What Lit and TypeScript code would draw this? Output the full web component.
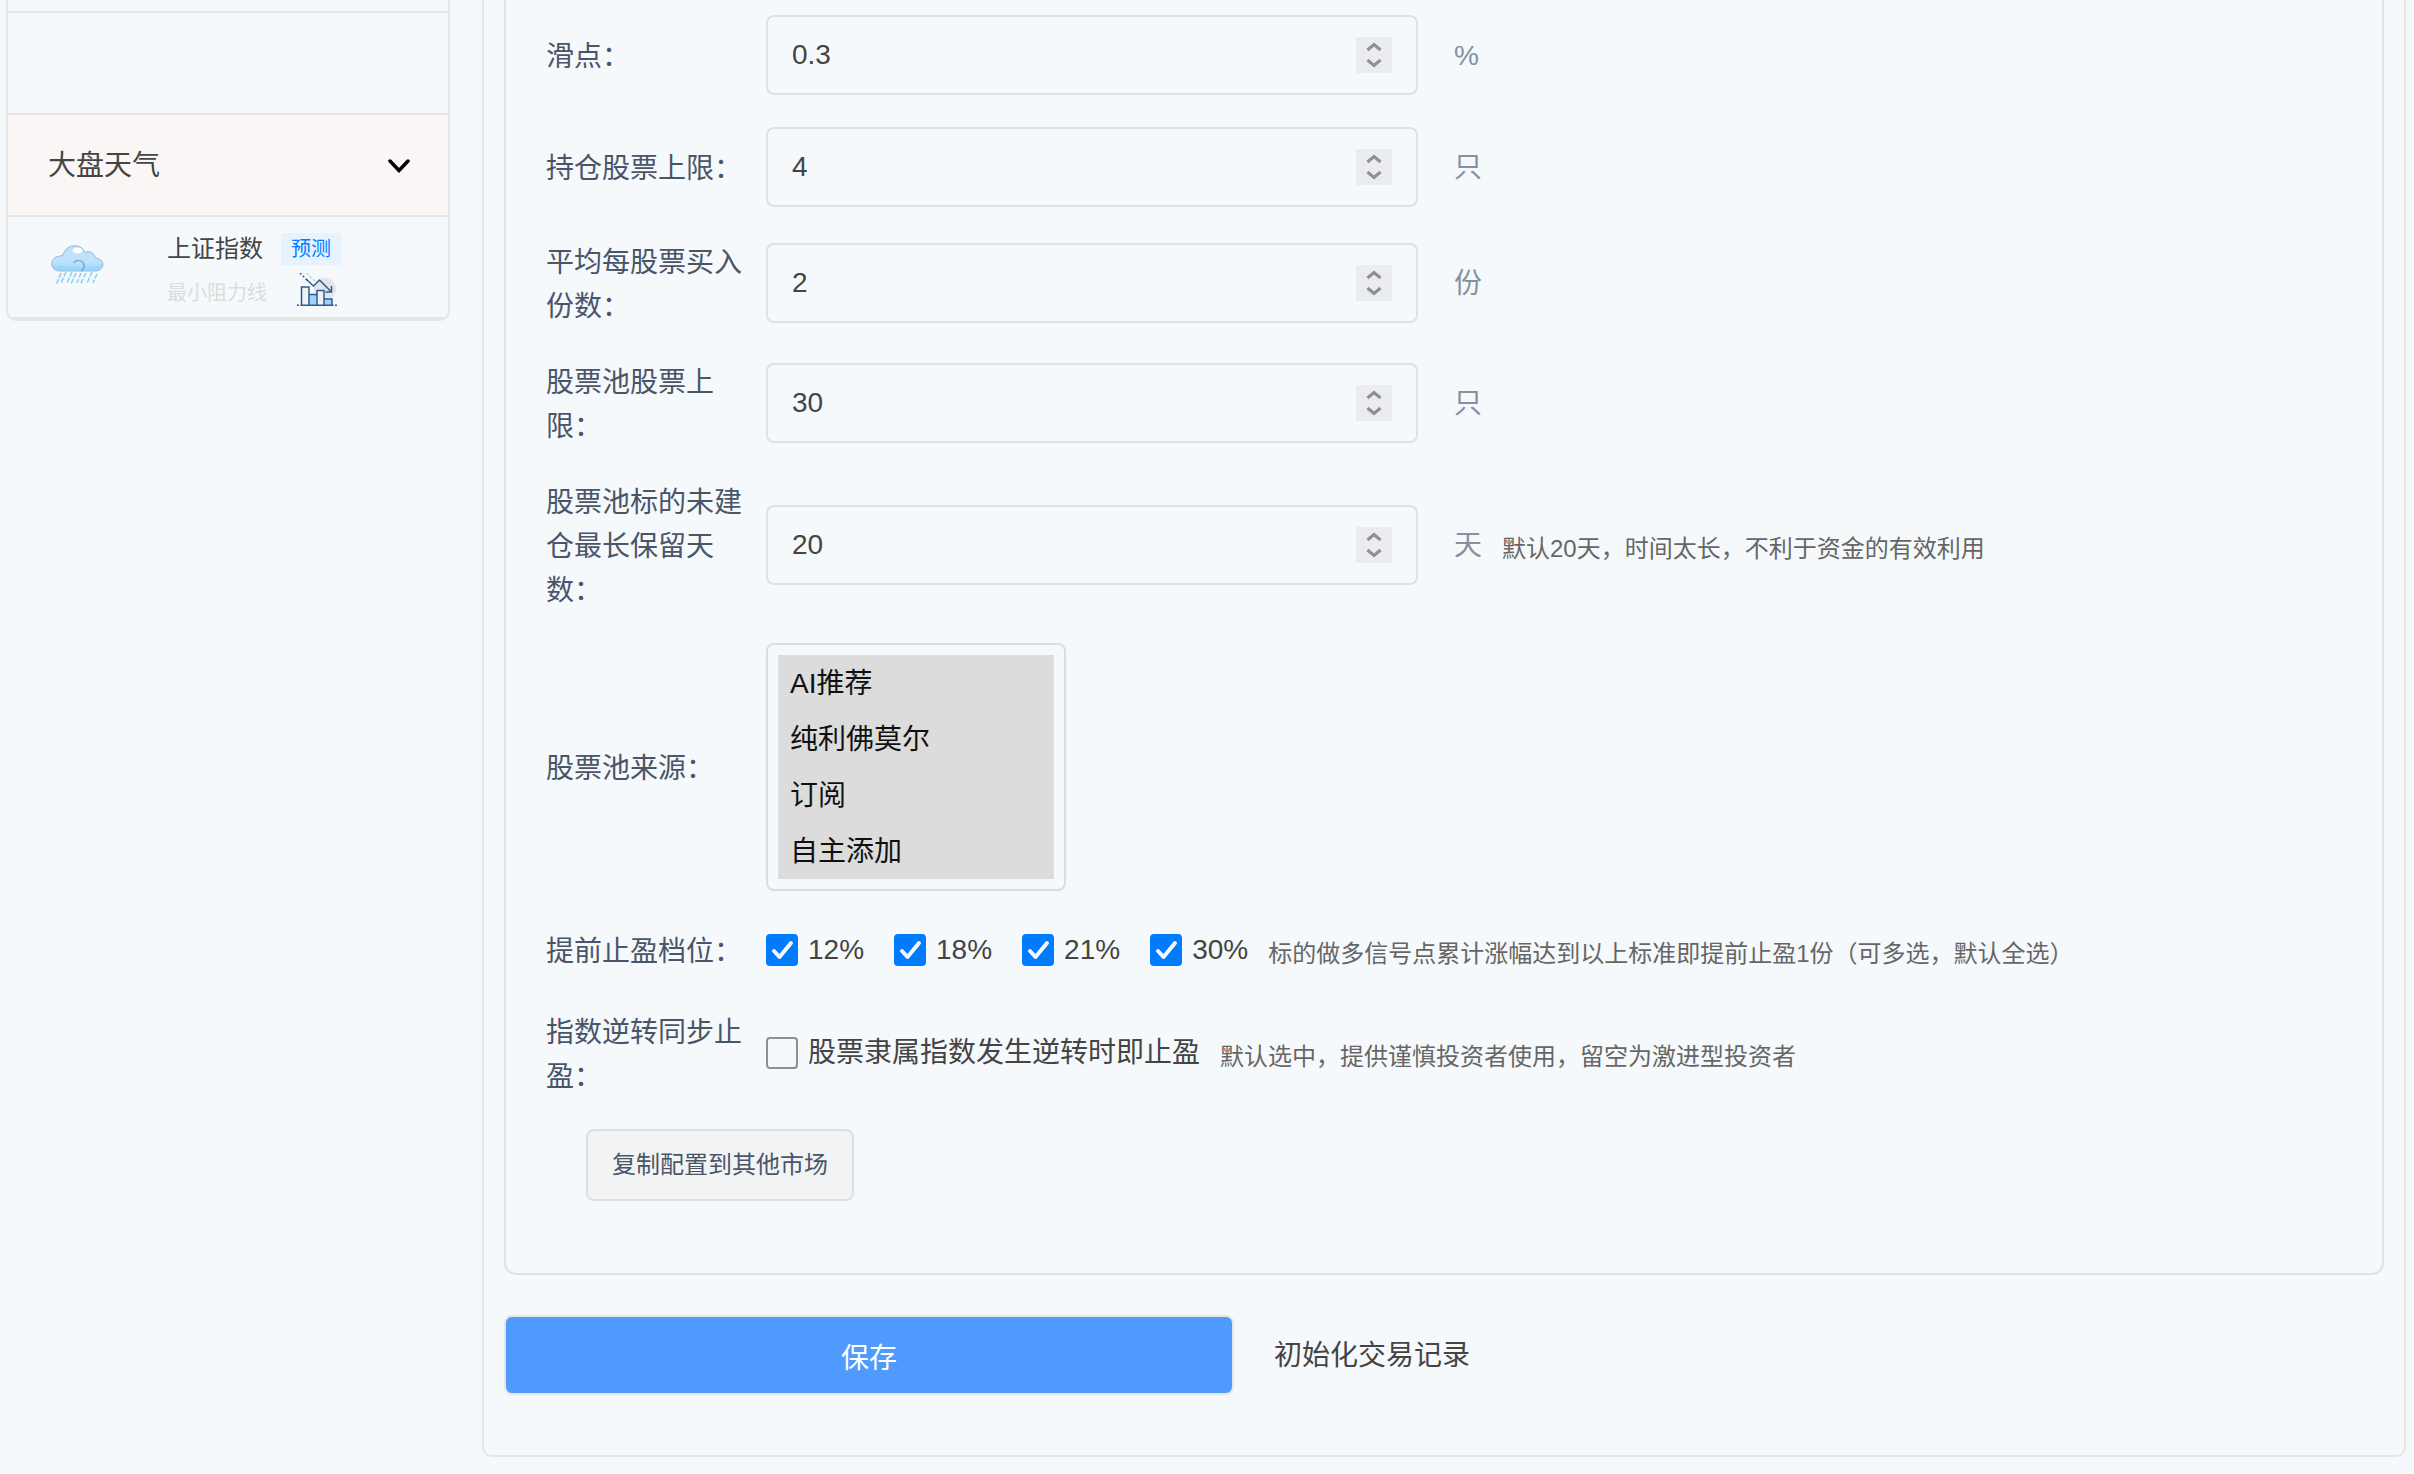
import { LitElement, html, css, svg } from "lit";
import { customElement, property } from "lit/decorators.js";

interface NumberField {
  id: string;
  label: string;
  value: string;
  unit: string;
  step: string;
  note?: string;
}

const FIELDS: NumberField[] = [
  { id: "slippage", label: "滑点：", value: "0.3", unit: "%", step: "0.1" },
  { id: "holdings", label: "持仓股票上限：", value: "4", unit: "只", step: "1" },
  { id: "portions", label: "平均每股票买入份数：", value: "2", unit: "份", step: "1" },
  { id: "pool", label: "股票池股票上限：", value: "30", unit: "只", step: "1" },
  {
    id: "retention",
    label: "股票池标的未建仓最长保留天数：",
    value: "20",
    unit: "天",
    step: "1",
    note: "默认20天，时间太长，不利于资金的有效利用",
  },
];

const SOURCES = ["AI推荐", "纯利佛莫尔", "订阅", "自主添加"];
const LEVELS = ["12%", "18%", "21%", "30%"];

@customElement("check-box")
class CheckBox extends LitElement {
  @property({ type: Boolean }) checked = false;
  @property() label = "";

  static styles = css`
    :host {
      display: block;
    }
    .item {
      display: flex;
      align-items: center;
      gap: 10px;
      line-height: 44px;
      color: #444;
    }
    .frame {
      position: relative;
      display: block;
      width: 32px;
      height: 32px;
    }
    .tick {
      display: block;
      appearance: none;
      width: 32px;
      height: 32px;
      margin: 0;
      box-sizing: border-box;
      border: 2px solid #8d8d9d;
      border-radius: 4px;
      background: transparent;
    }
    .tick:checked {
      border-color: #007bff;
      background: #007bff;
    }
    .mark {
      position: absolute;
      inset: 0;
      pointer-events: none;
      visibility: hidden;
    }
    .tick:checked + .mark {
      visibility: visible;
    }
  `;

  render() {
    return html`<label class="item">
      <span class="frame">
        <input class="tick" type="checkbox" .checked=${this.checked} />
        <svg class="mark" width="32" height="32" viewBox="0 0 32 32" fill="none" stroke="#f5f9fc" stroke-width="4" stroke-linecap="round" stroke-linejoin="round">
          <path d="M8 17 13.500 23 25 9" />
        </svg>
      </span>
      <span>${this.label}</span>
    </label>`;
  }
}

const cloudIcon = svg`
  <defs>
    <linearGradient id="sky" x1="0" y1="0" x2="0" y2="1">
      <stop offset="0" stop-color="#bfe1f8" />
      <stop offset="0.65" stop-color="#bde3fb" />
      <stop offset="1" stop-color="#93cdf5" />
    </linearGradient>
  </defs>
  <path d="M9 26C4 26 .8 23 .8 18.8.8 14.5 4 11.500 8.500 11.300 10 10.500 11 10.300 12 10.200 13.500 4.500 18 .8 23.500.8 28.500.8 32.500 3.500 34 7.500 39 5.500 43.500 8.500 44.500 13 49 13.500 51.800 16 51.800 19.500 51.800 23.500 48.500 26 44 26Z" fill="url(#sky)" stroke="#8fb9df" />
  <path d="M2 20C6 24 10 19 14 22 18 25 24 24 28 21 34 25 44 24 51 19 51 23.500 48 25.500 44 25.500H9C5 25.500 2.500 23.500 2 20Z" fill="#9ed6f8" />
  <path d="M23 18C24 15 32 14 33 20 33.500 23 32 25 30 26" fill="none" stroke="#72a9dd" stroke-width="1.500" />
  <ellipse cx="26.500" cy="5.500" rx="5" ry="3" fill="#fff" />
  <path d="M10 28 5.500 39M15 27 9.500 39M21 27 16 38M25 28 20 39M30 28 26 38M35 28 29.500 39M41 27 36 38M46 29 42 38" fill="none" stroke="#86d2f8" stroke-width="1.600" stroke-dasharray="5 1.500" />`;

const chartIcon = svg`
  <circle cx="28" cy="17" r="11" fill="#e4e5e9" />
  <path d="M12 22.500H20V33H12Z" fill="#9cd3fb" />
  <path d="M27 27H35V33H27Z" fill="#9cd3fb" />
  <path d="M4.500 15H12V33H4.500ZM20 18.500H27V33H20Z" fill="#eef1f6" />
  <path d="M4.500 33V15H12V33M12.500 22.500H20M20 33V18.500H27V33M27 27H35V33" fill="none" stroke="#2f5b92" stroke-width="1.500" />
  <path d="M0 33.200H40" fill="none" stroke="#2f5b92" stroke-width="1.500" stroke-dasharray="2 1.500 33 1.500" />
  <path d="M9 7 16.500 14 22.500 8 34.500 20M34.500 14V20H28.500" fill="none" stroke="#2f5b92" stroke-width="1.500" />
  <path d="M3 1 10 8" fill="none" stroke="#2f5b92" stroke-width="1.500" stroke-dasharray="2 2" />
  <path d="M9.500 1 18 9" fill="none" stroke="#a9adb5" stroke-width="1" stroke-dasharray="3 1.500" />`;

@customElement("app-root")
class AppRoot extends LitElement {
  static styles = css`
    :host {
      display: block;
      min-height: 100vh;
      background: #f5f9fc;
      color: #444;
      font-family: "Liberation Sans", "Noto Sans CJK SC", sans-serif;
      font-size: 28px;
      line-height: 44px;
    }
    .page {
      display: grid;
      grid-template-columns: 444px minmax(0, 1fr);
      gap: 32px;
      align-items: start;
      padding: 0 8px 16px 6px;
    }
    .side {
      border: solid #e6e6e6;
      border-width: 0 2px 2px;
      border-radius: 0 0 10px 10px;
      overflow: hidden;
    }
    .slot {
      height: 100px;
      border-bottom: 2px solid #e6e6e6;
    }
    .slot.cut {
      height: 11px;
    }
    .fold {
      display: flex;
      align-items: center;
      justify-content: space-between;
      width: 100%;
      height: 102px;
      padding: 2px 38px 0 40px;
      border: 0;
      border-bottom: 2px solid #e6e6e6;
      background: #faf6f5;
      color: #444;
      font: inherit;
    }
    .index {
      display: flex;
      align-items: center;
      height: 100px;
      border-bottom: 2px solid #e6e6e6;
      padding: 0 40px 0 43px;
      gap: 62px;
    }
    .facts {
      display: grid;
      gap: 4px;
      padding-top: 8px;
    }
    .line {
      display: flex;
      align-items: center;
      gap: 18px;
      height: 40px;
    }
    .line.low {
      align-items: flex-start;
      gap: 30px;
      line-height: 40px;
    }
    .name {
      font-size: 24px;
    }
    .badge {
      padding: 0 10px;
      background: #e6f3ff;
      color: #007bff;
      font-size: 20px;
      line-height: 32px;
      text-decoration: none;
    }
    .faint {
      color: #dcdcdc;
      font-size: 20px;
    }
    .icon {
      display: block;
      flex: none;
    }
    .main {
      padding: 0 20px 60px;
      border: solid #e6e6e6;
      border-width: 0 2px 2px;
      border-radius: 0 0 10px 10px;
    }
    .panel {
      display: grid;
      gap: 32px;
      padding: 15px 40px 72px;
      border: solid #dee2e6;
      border-width: 0 2px 2px;
      border-radius: 0 0 12px 12px;
    }
    .row {
      display: grid;
      grid-template-columns: 220px minmax(0, 163fr) minmax(0, 231fr);
      align-items: center;
    }
    .row.wide {
      grid-template-columns: 220px minmax(0, 1fr);
      min-height: 54px;
    }
    .caption {
      margin-bottom: -2px;
      padding: 2px 20px 0 0;
      color: #4a5568;
    }
    .box {
      display: flex;
      align-items: center;
      height: 80px;
      box-sizing: border-box;
      padding-right: 24px;
      border: 2px solid #dee2e6;
      border-radius: 8px;
    }
    .field {
      flex: 1;
      min-width: 0;
      height: 100%;
      box-sizing: border-box;
      padding: 0 0 0 24px;
      border: 0;
      outline: 0;
      background: transparent;
      color: #444;
      font: inherit;
      appearance: textfield;
    }
    .field::-webkit-inner-spin-button {
      appearance: none;
      margin: 0;
    }
    .stepper {
      display: flex;
      flex-direction: column;
      width: 36px;
      background: #ebecee;
    }
    .arrow {
      display: block;
      height: 18px;
      padding: 0;
      border: 0;
      background: transparent;
    }
    .glyph {
      display: block;
      margin: 0 auto;
    }
    .after {
      display: flex;
      align-items: center;
      gap: 20px;
      padding-left: 36px;
    }
    .unit {
      padding-top: 2px;
      color: #8492a0;
    }
    .note {
      padding-top: 8px;
      color: #666;
      font-size: 24px;
      line-height: 40px;
    }
    .checks {
      display: flex;
      align-items: center;
      gap: 20px;
    }
    .levels {
      display: flex;
      gap: 30px;
    }
    .sources {
      display: block;
      width: 300px;
      height: 248px;
      box-sizing: border-box;
      padding: 10px;
      border: 2px solid #dcdcdc;
      border-radius: 8px;
      outline: 0;
      background: transparent;
      overflow: hidden;
      color: #212121;
      font: inherit;
    }
    .source {
      padding: 6px 12px 10px;
      line-height: 40px;
    }
    .source:checked {
      background: linear-gradient(#dcdcdc, #dcdcdc);
    }
    .copy {
      justify-self: start;
      height: 72px;
      margin-left: 40px;
      padding: 0 24px;
      border: 2px solid #dcdfe6;
      border-radius: 8px;
      background: #f2f3f4;
      color: #4a5568;
      font: inherit;
      font-size: 24px;
    }
    .actions {
      display: grid;
      grid-template-columns: minmax(0, 73fr) minmax(0, 115fr);
      align-items: center;
      padding-top: 40px;
    }
    .save {
      height: 80px;
      padding: 8px 0 0;
      border: 2px solid #e6e6e6;
      border-radius: 8px;
      background: #4f9aff;
      color: #fff;
      font: inherit;
    }
    .reset {
      justify-self: start;
      padding: 2px 0 0 40px;
      border: 0;
      background: transparent;
      color: #444;
      font: inherit;
    }
  `;

  private bump(id: string, up: boolean) {
    const el = this.renderRoot.querySelector<HTMLInputElement>(`#${id}`)!;
    up ? el.stepUp() : el.stepDown();
  }

  private field(f: NumberField) {
    return html`<div class="row">
      <label class="caption" for=${f.id}>${f.label}</label>
      <div class="box">
        <input class="field" id=${f.id} type="number" step=${f.step} value=${f.value} />
        <span class="stepper">
          <button class="arrow" type="button" aria-label="增加" @click=${() => this.bump(f.id, true)}>
            <svg class="glyph" width="18" height="18" viewBox="0 0 18 18" fill="none" stroke="#8d8d9d" stroke-width="3">
              <path d="M2.500 13 9 7.500 15.500 13" />
            </svg>
          </button>
          <button class="arrow" type="button" aria-label="减少" @click=${() => this.bump(f.id, false)}>
            <svg class="glyph" width="18" height="18" viewBox="0 0 18 18" fill="none" stroke="#8d8d9d" stroke-width="3">
              <path d="M2.500 5 9 10.500 15.500 5" />
            </svg>
          </button>
        </span>
      </div>
      <div class="after">
        <span class="unit">${f.unit}</span>
        ${f.note ? html`<span class="note">${f.note}</span>` : null}
      </div>
    </div>`;
  }

  render() {
    return html`<div class="page">
      <aside class="side">
        <div class="slot cut"></div>
        <div class="slot"></div>
        <button class="fold" type="button" aria-expanded="true">
          <span>大盘天气</span>
          <svg class="icon" width="22" height="14" viewBox="0 0 22 14" fill="none" stroke="#000" stroke-width="3.500" stroke-linecap="round">
            <path d="M2 2 11 11.500 20 2" />
          </svg>
        </button>
        <div class="index">
          <svg class="icon" width="54" height="44" viewBox="0 0 54 44">${cloudIcon}</svg>
          <div class="facts">
            <div class="line"><span class="name">上证指数</span><a class="badge" href="#forecast">预测</a></div>
            <div class="line low">
              <span class="faint">最小阻力线</span>
              <svg class="icon" width="42" height="34" viewBox="0 1 42 34">${chartIcon}</svg>
            </div>
          </div>
        </div>
      </aside>
      <main class="main">
        <section class="panel">
          ${FIELDS.map((f) => this.field(f))}
          <div class="row wide">
            <label class="caption" for="sources">股票池来源：</label>
            <select class="sources" id="sources" multiple size="4">
              ${SOURCES.map((s) => html`<option class="source" selected>${s}</option>`)}
            </select>
          </div>
          <div class="row wide" role="group" aria-labelledby="levels">
            <span class="caption" id="levels">提前止盈档位：</span>
            <div class="checks">
              <div class="levels">${LEVELS.map((l) => html`<check-box .label=${l} .checked=${true}></check-box>`)}</div>
              <span class="note">标的做多信号点累计涨幅达到以上标准即提前止盈1份（可多选，默认全选）</span>
            </div>
          </div>
          <div class="row wide" role="group" aria-labelledby="reversal">
            <span class="caption" id="reversal">指数逆转同步止盈：</span>
            <div class="checks">
              <check-box .label=${"股票隶属指数发生逆转时即止盈"}></check-box>
              <span class="note">默认选中，提供谨慎投资者使用，留空为激进型投资者</span>
            </div>
          </div>
          <button class="copy" type="button">复制配置到其他市场</button>
        </section>
        <div class="actions">
          <button class="save" type="button">保存</button>
          <button class="reset" type="button">初始化交易记录</button>
        </div>
      </main>
    </div>`;
  }
}
